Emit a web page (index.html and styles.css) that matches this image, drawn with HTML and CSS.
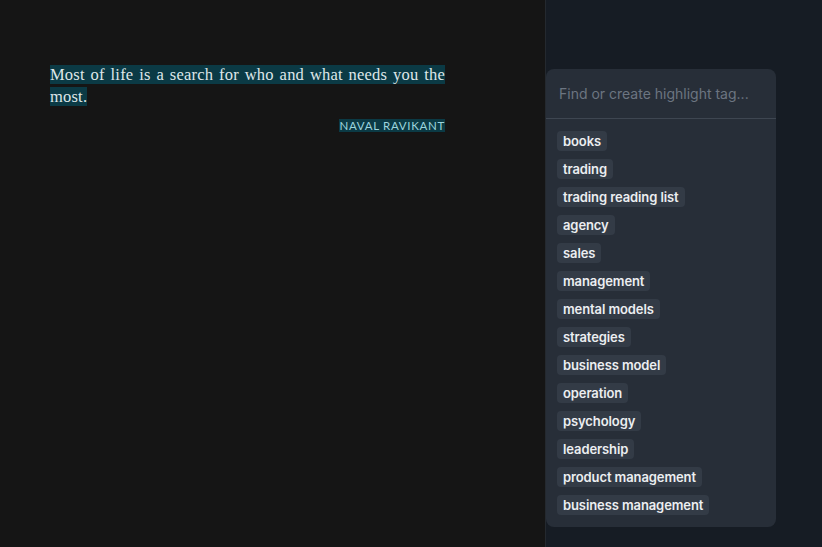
FILE: index.html
```html
<!DOCTYPE html>
<html>
<head>
<meta charset="utf-8">
<link rel="stylesheet" href="styles.css">
</head>
<body>
<div class="app">
  <main class="reader">
    <div class="highlight">
      <p class="quote"><span class="mark">Most of life is a search for who and what needs you the most.</span></p>
      <div class="author"><span class="mark">NAVAL RAVIKANT</span></div>
    </div>
  </main>
  <aside class="side">
    <div class="popup">
      <div class="search">Find or create highlight tag...</div>
      <ul class="tags">
        <li><span class="tag">books</span></li>
        <li><span class="tag">trading</span></li>
        <li><span class="tag">trading reading list</span></li>
        <li><span class="tag">agency</span></li>
        <li><span class="tag">sales</span></li>
        <li><span class="tag">management</span></li>
        <li><span class="tag">mental models</span></li>
        <li><span class="tag">strategies</span></li>
        <li><span class="tag">business model</span></li>
        <li><span class="tag">operation</span></li>
        <li><span class="tag">psychology</span></li>
        <li><span class="tag">leadership</span></li>
        <li><span class="tag">product management</span></li>
        <li><span class="tag">business management</span></li>
      </ul>
    </div>
  </aside>
</div>
</body>
</html>
```
FILE: styles.css
```css
html, body {
  margin: 0;
  padding: 0;
  height: 100%;
}
body {
  background: #151515;
  font-family: Inter, "Noto Sans", sans-serif;
}
.app {
  display: flex;
  height: 547px;
}
.reader {
  width: 546px;
  flex: none;
  background: #151515;
  border-right: 1px solid #24292f;
  box-sizing: border-box;
  padding: 64px 100px 0 50px;
}
.highlight {
  width: 395px;
}
.quote {
  margin: 0;
  font-family: "Liberation Serif", serif;
  font-size: 16.5px;
  letter-spacing: 0.2px;
  line-height: 22px;
  color: #dfe7ea;
  text-align: justify;
  text-align-last: left;
}
.mark {
  background: #0b3a45;
}
.author {
  margin-top: 11px;
  text-align: right;
  font-family: Lato, "Liberation Sans", sans-serif;
  font-size: 11.5px;
  font-weight: 400;
  letter-spacing: 0.7px;
  line-height: 13px;
  color: #9dd5de;
}
.side {
  flex: 1;
  background: #161c24;
  padding-top: 69px;
}
.popup {
  width: 230px;
  height: 458px;
  box-sizing: border-box;
  background: #272e38;
  border-radius: 8px;
}
.search {
  height: 50px;
  box-sizing: border-box;
  padding: 16px 13px 0;
  font-size: 14px;
  line-height: 18px;
  color: #6c7581;
  border-bottom: 1px solid #3e4651;
}
.tags {
  list-style: none;
  margin: 0;
  padding: 12px 11px 0;
  display: flex;
  flex-direction: column;
  gap: 8px;
}
.tags li {
  display: flex;
  height: 20px;
}
.tag {
  display: inline-flex;
  align-items: center;
  height: 20px;
  padding: 0 6px;
  border-radius: 4px;
  background: #333b46;
  color: #eceef1;
  font-size: 13px;
  font-weight: 600;
  letter-spacing: -0.1px;
  line-height: 20px;
}
```
